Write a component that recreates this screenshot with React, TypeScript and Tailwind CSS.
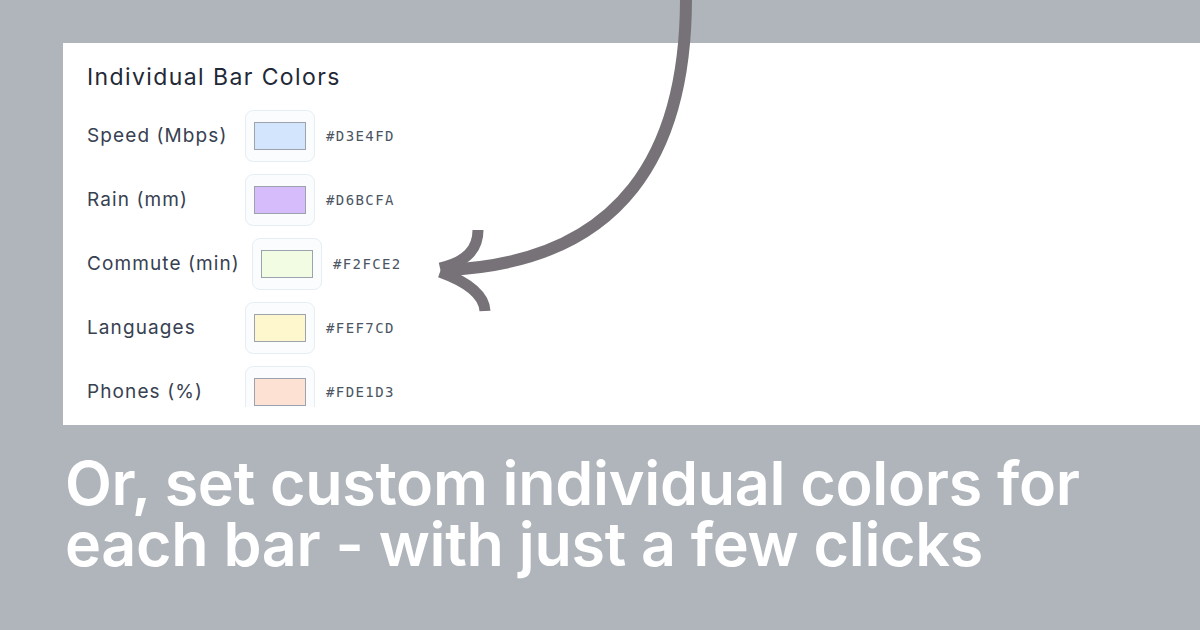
const rows = [
  { label: "Speed (Mbps)", hex: "#D3E4FD" },
  { label: "Rain (mm)", hex: "#D6BCFA" },
  { label: "Commute (min)", hex: "#F2FCE2" },
  { label: "Languages", hex: "#FEF7CD" },
  { label: "Phones (%)", hex: "#FDE1D3" },
];

const Arrow = () => (
  <svg className="pointer-events-none absolute left-0 top-0" width="1200" height="630" viewBox="0 0 1200 630" fill="none">
    <path d="M686 -2 C686 150 625 262 446 270" stroke="#777277" strokeWidth="12" />
    <path d="M478 230 C478 250 466 262 440 268" stroke="#777277" strokeWidth="11" />
    <path d="M440 272 C462 280 484 292 485 311" stroke="#777277" strokeWidth="11" />
  </svg>
);

export default function App() {
  return (
    <div className="relative h-[630px] w-[1200px] overflow-hidden bg-[#afb5bb]" style={{ fontFamily: "Inter, 'Noto Sans', sans-serif" }}>
      <div className="ml-[63px] mt-[43px] h-[382px] bg-white px-[24px] pt-[19px]">
        <h2 className="text-[23px] leading-[31px] tracking-[1.4px] text-[#1f2937]">Individual Bar Colors</h2>
        <div className="mt-[17px] flex h-[297px] flex-col gap-[12px] overflow-hidden">
          {rows.map((r) => (
            <div key={r.label} className="flex items-center">
              <span className="min-w-[146px] text-[19px] tracking-[1.1px] text-[#374151]">{r.label}</span>
              <div className="ml-[12px] flex h-[52px] w-[70px] shrink-0 items-center justify-center rounded-[8px] border border-[#e6eef3] bg-[#fbfcfe]">
                <div className="h-[28px] w-[52px] border border-[#9ca3af]" style={{ backgroundColor: r.hex }} />
              </div>
              <span className="ml-[11px] text-[14px] tracking-[1.4px] text-[#4b5563]" style={{ fontFamily: "'DejaVu Sans Mono', monospace" }}>{r.hex}</span>
            </div>
          ))}
        </div>
      </div>
      <p className="ml-[65px] mt-[28px] text-[61px] font-semibold leading-[61px] tracking-[-0.3px] text-white">
        Or, set custom individual colors for<br />each bar - with just a few clicks
      </p>
      <Arrow />
    </div>
  );
}
